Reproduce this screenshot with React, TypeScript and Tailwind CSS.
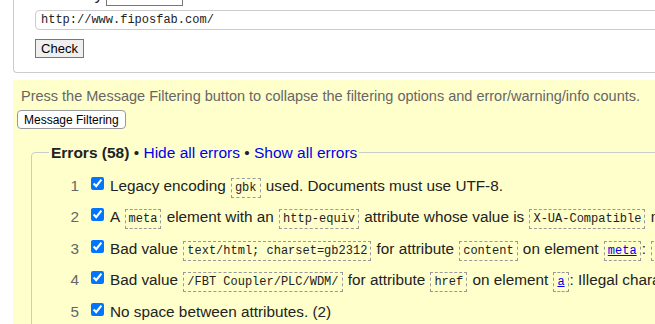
import React from "react"

const sans = "font-['Liberation_Sans',Arial,sans-serif]"
const mono = "font-['Liberation_Mono','DejaVu_Sans_Mono',monospace]"

function Code({ children, link }: { children: React.ReactNode; link?: boolean }) {
  return (
    <code
      className={`${mono} text-[12px] border border-dashed border-[#999] px-[3px] py-[2px] mx-[1px] ${
        link ? "text-[#0000ee] underline" : "text-[#222]"
      }`}
    >
      {children}
    </code>
  )
}

const rows: React.ReactNode[] = [
  <>
    Legacy encoding <Code>gbk</Code> used. Documents must use UTF-8.
  </>,
  <>
    A <Code>meta</Code> element with an <Code>http-equiv</Code> attribute whose value is{" "}
    <Code>X-UA-Compatible</Code> must have a content attribute with the value IE=edge.
  </>,
  <>
    Bad value <Code>text/html; charset=gb2312</Code> for attribute <Code>content</Code> on element{" "}
    <Code link>meta</Code>: <Code>charset=</Code> is not allowed.
  </>,
  <>
    Bad value <Code>/FBT Coupler/PLC/WDM/</Code> for attribute <Code>href</Code> on element{" "}
    <Code link>a</Code>: Illegal character in path segment.
  </>,
  <>No space between attributes. (2)</>,
]

export default function App() {
  return (
    <div className={`w-[655px] h-[324px] overflow-hidden bg-white relative ${sans}`}>
      <div className="w-[1000px]">
        {/* check form */}
        <div className="ml-[13px] -mt-[16px] h-[89px] border-l border-b border-[#ccc] rounded-bl-[4px] pl-[22px]">
          <div className="flex items-center h-[22px] text-[16px] text-[#222]">
            <span>Check by</span>
            <span className="ml-[3px] w-[77px] h-[22px] border border-[#767676] flex items-center justify-between px-[4px] text-[16px]">
              address <span className="text-[11px]">▼</span>
            </span>
          </div>
          <div
            className={`-ml-[1px] mt-[4px] h-[20px] w-[900px] border border-[#ccc] rounded-[4px] flex items-center pl-[5px] ${mono} text-[12px] text-[#222]`}
          >
            http://www.fiposfab.com/
          </div>
          <button className="-ml-[1px] mt-[9px] w-[49px] h-[19px] bg-[#efefef] border border-[#767676] text-[13px] text-black leading-none">
            Check
          </button>
        </div>

        {/* results */}
        <div className="ml-[13px] mt-[7px] bg-[#ffffcc] h-[260px] pt-[8px]">
          <p className="pl-[8px] text-[14.5px] text-[#666] leading-[17px]">
            Press the Message Filtering button to collapse the filtering options and error/warning/info counts.
          </p>
          <button className="ml-[4px] mt-[5px] h-[19px] px-[6px] bg-white border border-[#999] rounded-[4px] text-[12px] text-black leading-none">
            Message Filtering
          </button>
          <fieldset className="ml-[18px] mt-[11px] border border-[#ccc] rounded-[4px] px-[17px] pb-[10px]">
            <legend className="px-[2px] text-[15.5px] leading-[22px] text-[#222]">
              <b>Errors (58)</b> • <span className="text-[#0000ee]">Hide all errors</span> •{" "}
              <span className="text-[#0000ee]">Show all errors</span>
            </legend>
            <ol className="mt-[7px]">
              {rows.map((r, i) => (
                <li key={i} className="flex items-center h-[31.5px] whitespace-nowrap text-[15.3px] text-[#222]">
                  <span className="w-[31px] text-right text-[#666] pr-[1px]">{i + 1}</span>
                  <input
                    type="checkbox"
                    defaultChecked
                    className="ml-[11px] mr-[6px] w-[13px] h-[13px] -mt-[6px]"
                  />
                  <span>{r}</span>
                </li>
              ))}
            </ol>
          </fieldset>
        </div>
      </div>
    </div>
  )
}
